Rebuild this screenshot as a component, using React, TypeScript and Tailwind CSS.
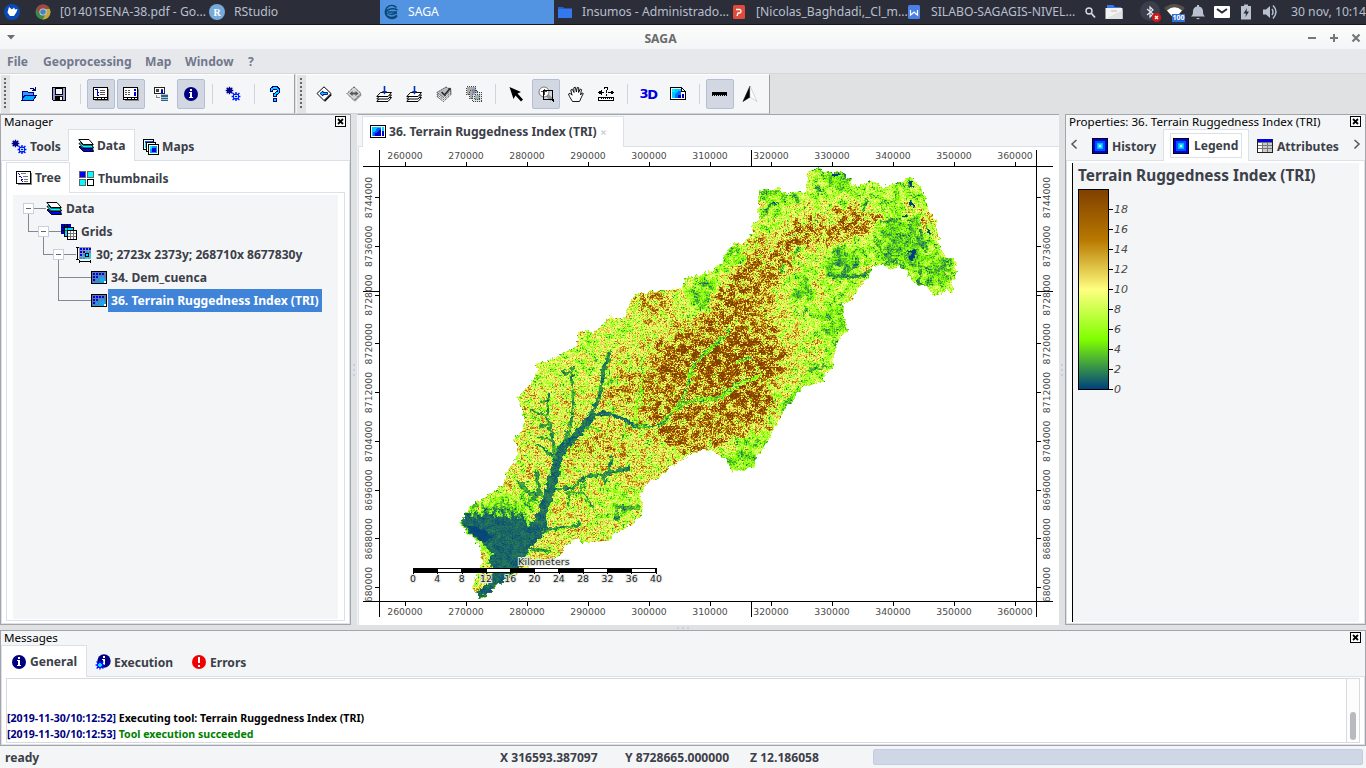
import React from "react";

type Kids = { children?: React.ReactNode };

/* ---------- icons ---------- */

function Ic({ children, w = 16, h = 16, smooth = false }: Kids & { w?: number; h?: number; smooth?: boolean }) {
  return (
    <svg width={w} height={h} viewBox={`0 0 ${w} ${h}`} className="shrink-0" shapeRendering={smooth ? "auto" : "crispEdges"}>
      {children}
    </svg>
  );
}

const gear = (cx: number, cy: number, r: number, color: string) => (
  <g stroke={color} fill="none" shapeRendering="auto">
    <circle cx={cx} cy={cy} r={r} strokeWidth="1.4" />
    <path
      strokeWidth="1.4"
      d={`M${cx} ${cy - r - 2}V${cy - r}M${cx} ${cy + r}V${cy + r + 2}M${cx - r - 2} ${cy}H${cx - r}M${cx + r} ${cy}H${cx + r + 2}M${cx - r - 1} ${cy - r - 1}L${cx - r + 1} ${cy - r + 1}M${cx + r - 1} ${cy + r - 1}L${cx + r + 1} ${cy + r + 1}M${cx + r + 1} ${cy - r - 1}L${cx + r - 1} ${cy - r + 1}M${cx - r - 1} ${cy + r + 1}L${cx - r + 1} ${cy + r - 1}`}
    />
  </g>
);

const GearsIcon = () => (
  <Ic>
    {gear(4.5, 4.5, 1.8, "#000090")}
    <circle cx="4.5" cy="4.5" r="2" fill="#000090" />
    {gear(11, 10.5, 2.4, "#0010ff")}
    <circle cx="11" cy="10.5" r="1.9" fill="#9fe4ff" />
    <circle cx="11" cy="10.5" r=".9" fill="#0020c0" />
  </Ic>
);

const OpenIcon = () => (
  <Ic>
    <path d="M9 2.5h3l2 2M14.500 1v4M11 4.500h3" fill="none" stroke="#000080" />
    <path d="M1 5h5l1 1h5v3H4l-3 5z" fill="#2f9bff" stroke="#000080" />
    <path d="M4 9h11.500l-3 5H1z" fill="#00a8ff" stroke="#000080" />
  </Ic>
);

const SaveIcon = () => (
  <Ic>
    <path d="M1.500 1.500h13v13h-12l-1-1z" fill="#9a9ad8" stroke="#000" />
    <path d="M4.500 2v6h7V2z" fill="#f4f5f7" stroke="#000" />
    <path d="M4 10h8v5H4z" fill="#000" />
    <path d="M9 11h2v3H9z" fill="#fff" />
  </Ic>
);

const WindowIcon = ({ right = false }: { right?: boolean }) => (
  <Ic>
    <path d="M2 14.500h13.500V3" fill="none" stroke="#888" />
    <path d="M.5 1.500h14v12H.5z" fill="#fff" stroke="#000" />
    <path d="M1 11.500h13M4.500 12v1M8.500 12v1M11.500 12v1" stroke="#000" />
    {right ? (
      <>
        <path d="M2 4.500h6M2 6.500h6M2 8.500h6" stroke="#555" strokeDasharray="2 1" />
        <path d="M11 3h2v2h-2zM11 6h2v4h-2z" fill="#0000e0" />
      </>
    ) : (
      <>
        <path d="M2 3.500h3M4.500 4v6M4 6.500h2M4 9.500h2" stroke="#0000c0" fill="none" />
        <path d="M7 4.500h5M7 6.500h5M7 8.500h5" stroke="#555" />
      </>
    )}
  </Ic>
);

const SourceIcon = () => (
  <Ic>
    <path d="M1.500 1.500h10v6h-10z" fill="#fff" stroke="#222" />
    <path d="M3 3h3v3H3zM8 3h2v1H8z" fill="#444" />
    <path d="M8 4h2v3H8z" fill="#0000d0" />
    <path d="M3.500 9v2.500H7" stroke="#888" fill="none" />
    <path d="M8 8h7v7H8z" fill="#31607f" />
    <path d="M8 8.500h7M8 11h7M8 13.500h7" stroke="#a7c6d6" />
  </Ic>
);

const InfoIcon = ({ color = "#000080", mark = "i" }: { color?: string; mark?: string }) => (
  <Ic>
    <circle cx="8" cy="8" r="7" fill={color} shapeRendering="auto" />
    {mark === "i" ? (
      <path d="M7 3h2v2H7zM6 6h3v5h1v1H6v-1h1V7H6z" fill="#fff" />
    ) : (
      <path d="M7 3h2v6H7zM7 11h2v2H7z" fill="#fff" />
    )}
  </Ic>
);

const ExecIcon = () => (
  <Ic>
    <circle cx="9" cy="7" r="6.700" fill="#000080" shapeRendering="auto" />
    <path d="M8 2h2v2H8zM7 5h3v6H8V6H7z" fill="#fff" />
    {gear(5, 11, 2.4, "#0010ff")}
    <circle cx="5" cy="11" r="1.700" fill="#00e0ff" />
  </Ic>
);

const HelpIcon = () => (
  <Ic>
    <path d="M4.500 6V3.500L6.500 2h3l2 1.500v2.500L8 8.500V11" fill="none" stroke="#000080" strokeWidth="3.600" />
    <path d="M4.500 5V3.500L6.500 2h3l2 1.500v2.500L8 8.500V10" fill="none" stroke="#00d8ff" strokeWidth="1.600" />
    <path d="M6 12h4v4H6z" fill="#000080" />
    <path d="M7 13h2v2H7z" fill="#00d8ff" />
  </Ic>
);

const DiamondIcon = ({ dim = false }: { dim?: boolean }) => (
  <Ic smooth>
    <path d="m8.500 15.300 6.800-6.800" fill="none" stroke={dim ? "#999" : "#000"} strokeWidth="1.400" />
    <path d="M8 .8 15 7.500l-7 7-7-7z" fill={dim ? "#d5d5d5" : "#fff"} stroke={dim ? "#444" : "#000"} strokeDasharray={dim ? "1.500 .7" : undefined} />
    {dim ? (
      <>
        <path d="M3.500 7.500 6.500 5v5zM12.500 7.500l-3-2.500v5z" fill="#555" />
        <path d="M6 7.500h4" stroke="#555" strokeWidth="2" />
      </>
    ) : (
      <path d="M4 7.500 7 5v1.500h4.500v2H7V10z" fill="#00cfff" stroke="#000080" strokeWidth=".9" />
    )}
  </Ic>
);

const LayersDownIcon = () => (
  <Ic smooth>
    <g fill="#fff" stroke="#000">
      <path d="M4.500 11.500 15.500 11.500 12 15.500H.8z" />
      <path d="M4.500 9 15.500 9 12 13H.8z" />
      <path d="M4.500 6.500 15.500 6.500 12 10.500H.8z" />
    </g>
    <path d="M8.500 0v7" stroke="#0030b0" strokeWidth="1.600" />
    <path d="M6 5h5l-2.500 3.500z" fill="#003090" />
  </Ic>
);

const StackDimIcon = () => (
  <Ic smooth>
    <g fill="#eee" stroke="#444" strokeDasharray="1.500 .8">
      <path d="M10 5.500 15.500 8l-8 7.500L.8 10.500z" />
      <path d="M10 3.500 15.500 6l-8 7.500L.8 8.500z" />
      <path d="M10 1 15.500 4l-8 7.500L.8 6.500z" fill="#bbb" />
    </g>
    <path d="m5.500 6 3 3 6-7" fill="none" stroke="#223" strokeWidth="1.500" />
  </Ic>
);

const CopiesDimIcon = () => (
  <Ic>
    <g fill="#aaa" stroke="#444" strokeDasharray="1 1">
      <path d="M.5.5h9v8h-9z" />
      <path d="M3.500 4.500h8v8h-8z" />
      <path d="M6.500 6.500h9v9h-9z" fill="#e2e2e2" />
      <path d="M8.500 8.500h5v5h-5z" fill="#aaa" />
    </g>
    <path d="M6 3h3v6H6z" fill="#7a86c0" opacity=".6" />
    <path d="M9 9h3v3H9z" fill="#6cc" opacity=".5" />
  </Ic>
);

const CursorIcon = () => (
  <Ic smooth>
    <path d="m1.500 1 11.500 5-3.500 1.500 5.500 6-2 2-5.500-6L5.500 13z" fill="#000" />
  </Ic>
);

const ZoomIcon = () => (
  <Ic>
    <path d="M9 9l5 5" stroke="#999" strokeWidth="3" />
    <circle cx="6" cy="6" r="5" fill="#fff" stroke="#777" shapeRendering="auto" />
    <path d="M6.500 3v6M3 5.500h6" stroke="#444" />
    <path d="M5.500 4.500h9v9h-9z" fill="none" stroke="#000" />
    <path d="M14 13h2v3h-1z" fill="#000" />
  </Ic>
);

const HandIcon = () => (
  <Ic smooth>
    <path
      d="M4.500 15.500 1.500 10.500l-1-2.500 1.500-.8 2 2L2.800 4l1.400-.8L6 6.500 5.800 1.800 7.300 1.200 8.400 6l.8-4.500 1.500.2-.1 4.800 1.600-3.500 1.300.6-1 5.400 1.500-2 1.300.5L13.500 11l-2 4.500z"
      fill="#fff"
      stroke="#000"
      strokeWidth=".9"
    />
  </Ic>
);

const MeasureIcon = () => (
  <Ic>
    <path d="M1 6.500h5M10 6.500h5" stroke="#000" />
    <path d="M0 6.500 3.500 4v5zM16 6.500 12.500 4v5z" fill="#000" />
    <path d="M6.500 3V1.500h3v2L8 5v2M8 8v1.500" stroke="#000" fill="none" />
    <path d="M.5 11.500h15v3H.5z" fill="#fff" stroke="#000" />
    <path d="M3.500 12v1M5.500 12v1M7.500 12v1M9.500 12v1M11.500 12v1M13.500 12v1" stroke="#000" />
  </Ic>
);

const MapDocIcon = () => (
  <Ic>
    <path d="M.5 1.500h11l4 4v8H.5z" fill="#fff" stroke="#000" />
    <path d="M2 3h9v9H2z" fill="#00c8ff" />
    <path d="M5 12V8l3-3h3v7z" fill="#0070ff" />
    <path d="M8 12V9h3v3z" fill="#0000c0" />
    <path d="M2 3h3v3H2z" fill="#00f0ff" />
    <path d="M12 8h2v4h-2z" fill="#0000c0" />
    <path d="M11.500 2v3.500h4" fill="none" stroke="#000" />
  </Ic>
);

const ScaleIcon = () => (
  <Ic>
    <path d="M0 6h15v3H0zM0 9h1v1H0zM14 9h1v1h-1z" fill="#000" />
    <path d="M2.500 9v1M4.500 9v1M6.500 9v1M8.500 9v1M10.500 9v1M12.500 9v1" stroke="#000" />
  </Ic>
);

const NorthIcon = () => (
  <Ic smooth>
    <path d="M8 0v11L1 15.500z" fill="#000" stroke="#000" strokeWidth=".6" />
    <path d="M8 0v11l7 4.500z" fill="#fff" stroke="#bbb" strokeWidth=".6" />
  </Ic>
);

const LayersIcon = () => (
  <Ic smooth>
    <path d="M1 9l1-1 3 2.500h9.500L15.500 13.500H5.500z" fill="#0000ff" stroke="#000" />
    <path d="M1 5.500l1.500-.8L5 7h9l1.500 3H5.500z" fill="#00ffff" stroke="#000" />
    <path d="M.8 1.500h10.200l4.300 5H5.300z" fill="#fff" stroke="#000" />
  </Ic>
);

const MapsIcon = () => (
  <Ic>
    <path d="M.5.5h10v10H.5z" fill="#fff" stroke="#000" />
    <path d="M2 2h8v2H2z" fill="#0060ff" />
    <path d="M2 4h1v5H2z" fill="#00e0ff" />
    <path d="M3.500 3.500h9v9h-9z" fill="#fff" stroke="#000" />
    <path d="M5.500 5.500h10v10h-10z" fill="#fff" stroke="#000" />
    <path d="M7 7h7v7H7z" fill="#00a0ff" />
    <path d="M9 9h4v4H9z" fill="#0000e0" />
    <path d="M7 7h2v3H7z" fill="#00f0ff" />
  </Ic>
);

const TreeIcon = () => (
  <Ic>
    <path d="M2 14.500h13.500V3" fill="none" stroke="#888" />
    <path d="M.5 1.500h14v12H.5z" fill="#fff" stroke="#000" />
    <path d="M2 3.500h2M3.500 4v3M4 6.500h2M5.500 7v5M6 9.500h1M6 11.500h1" stroke="#0000d0" fill="none" strokeDasharray="1 .6" />
    <path d="M5 3.500h5M7 6.500h5M8 9.500h4M8 11.500h4" stroke="#777" />
  </Ic>
);

const ThumbsIcon = () => (
  <Ic>
    <path d="M.5.500h6v6h-6z" fill="#0000ff" stroke="#666" />
    <path d="M8.500.500h6v6h-6z" fill="#00ffff" stroke="#666" />
    <path d="M.5 8.500h6v6h-6z" fill="#00ffff" stroke="#666" />
    <path d="M8.500 8.500h6v6h-6z" fill="#fff" stroke="#000" />
  </Ic>
);

const GridsIcon = () => (
  <Ic>
    <path d="M0 0h10v10H0z" fill="#0000c0" />
    <path d="M0 3.500h10M0 6.500h10M3.500 0v10M6.500 0v10" stroke="#000" />
    <path d="M3.500 3.500h9v9h-9z" fill="#00e0ff" stroke="#000" />
    <path d="M4 6.500h8M6.500 4v8" stroke="#086" />
    <path d="M6.500 6.500h9v9h-9z" fill="#fff" stroke="#000" />
    <path d="M7 9.500h8M7 12.500h8M9.500 7v8M12.500 7v8" stroke="#777" />
  </Ic>
);

const gridCells = (x0: number, y0: number, nx: number, ny: number) => {
  const out: React.ReactNode[] = [];
  for (let j = 0; j < ny; j++)
    for (let i = 0; i < nx; i++) {
      const t = i + j;
      const blue = j === 0 || t < 3;
      out.push(
        <rect key={`${i}-${j}`} x={x0 + i * 3} y={y0 + j * 3} width="2" height="2" fill={blue ? "#0000f0" : t < 5 ? "#18a0f0" : "#10e0ff"} />
      );
    }
  return out;
};

const SystemIcon = () => (
  <Ic>
    <path d="M3 0h12v12H3z" fill="#8f9aa5" />
    {gridCells(4, 1, 4, 4)}
    <path d="M1.500 0v13M0 .5h3M0 12.500h3M3 14.500h12M3.500 13v3M14.500 13v3" stroke="#000" />
    <path d="M9.500 6.500h3v3h-3z" fill="#0df" stroke="#000" />
  </Ic>
);

const GridIcon = () => (
  <Ic>
    <path d="M.5 1.500h15v12H.5z" fill="#5b7c9e" stroke="#000" />
    {gridCells(2, 3, 4, 3)}
    <path d="M9 8h5v4H9z" fill="#18a8f0" />
    <path d="M2 12h12v1H2z" fill="#18a0e0" />
    <path d="M13 11h2v2h-2z" fill="#fff" />
  </Ic>
);

const MapTabIcon = () => (
  <Ic>
    <path d="M.5 1.500h15v12H.5z" fill="#fff" stroke="#000" />
    <path d="M2 3h9v9H2z" fill="#00c8ff" />
    <path d="M3 12V8l3-1 1-3h4v8z" fill="#0060ff" />
    <path d="M5 12V9l3-1 1-2h2v6z" fill="#0000d0" />
    <path d="M12 3h2v4h-2z" fill="#00d8ff" />
    <path d="M12 7h2v5h-2z" fill="#0000c0" />
  </Ic>
);

const RadialIcon = () => (
  <Ic>
    <path d="M0 0h16v16H0z" fill="#000" />
    <path d="M1 1h14v14H1z" fill="#0000d8" />
    <path d="M3 3h10v10H3z" fill="#0050ff" />
    <path d="M5 5h6v6H5z" fill="#00b4ff" />
    <path d="M6 6h4v4H6z" fill="#00e8ff" />
    <path d="M7 7h2v2H7z" fill="#fff" />
  </Ic>
);

const TableIcon = () => (
  <Ic>
    <path d="M.5 1.500h15v13H.5z" fill="#fff" stroke="#222" />
    <path d="M1 1h14v3H1z" fill="#0000e0" />
    <path d="M6 4h9v10H6z" fill="#ccc" />
    <path d="M1 4.500h14M1 7.500h14M1 10.500h14M5.500 4v10M10.500 4v10" stroke="#777" />
  </Ic>
);

const CloseBox = () => (
  <Ic w={11} h={11}>
    <path d="M.5.500h10v10H.5z" fill="#fff" stroke="#000" />
    <path d="m3 3 5 5M8 3 3 8" stroke="#000" strokeWidth="1.800" shapeRendering="auto" />
  </Ic>
);

/* ---------- desktop bar ---------- */

function Task({ icon, label, cls }: { icon: React.ReactNode; label: string; cls: string }) {
  return (
    <div className={`flex h-full shrink-0 items-center whitespace-nowrap ${cls}`}>
      {icon}
      <span>{label}</span>
    </div>
  );
}

const DesktopBar = () => (
  <div className="flex h-[25px] shrink-0 items-center border-b border-[#17181c] bg-[#2b2e39] text-[12.200px] text-[#b9bfcd]">
    <div className="flex w-[35px] shrink-0 justify-start pl-1">
      <Ic smooth>
        <circle cx="8" cy="8" r="8" fill="#0a4ab4" />
        <path d="M5 3 8 5.500 10 3.500l1 2 2.500-.5-1 3L10 12H6L3.500 8.500z" fill="#fff" />
      </Ic>
    </div>
    <Task
      cls="w-[174px] gap-[9px]"
      label="[01401SENA-38.pdf - Go..."
      icon={
        <Ic smooth>
          <circle cx="8" cy="8" r="7.500" fill="#3a8a4a" />
          <path d="M8 .5A7.500 7.500 0 0 1 14.500 4.500H8L4.500 10 1.500 4.300A7.500 7.500 0 0 1 8 .5z" fill="#a84440" />
          <path d="M14.800 5A7.500 7.500 0 0 1 7.500 15.500L11.500 9 10.500 5z" fill="#c9a63c" />
          <circle cx="8" cy="8" r="3.600" fill="#d5d8de" />
          <circle cx="8" cy="8" r="2.800" fill="#4680c8" />
        </Ic>
      }
    />
    <Task
      cls="w-[171px] gap-[9px]"
      label="RStudio"
      icon={
        <div className="flex size-4 items-center justify-center rounded-full bg-[#75aadb] font-['Liberation_Serif',serif] text-[10px] font-bold text-white">
          R
        </div>
      }
    />
    <Task
      cls="w-[174px] gap-[9px] bg-[#5294e2] pl-[3px] !text-white"
      label="SAGA"
      icon={
        <Ic smooth>
          <path d="M13.500 3.500A6.500 6.500 0 1 0 14 12M14.500 6C10 3.500 4 5 3 8.500c2 3 7 2 11 .5M5 8h9M4 12c3 2 7 2 10-1" fill="none" stroke="#0b4778" strokeWidth="1.600" />
          <path d="M4 5c2-3 6-3 8-1M4 10c3 2 7 2 10 0" fill="none" stroke="#2f8fd0" strokeWidth="1" />
        </Ic>
      }
    />
    <Task
      cls="w-[176px] gap-[9px] pl-[3px]"
      label="Insumos - Administrado..."
      icon={
        <Ic smooth>
          <path d="M1 3h5l1 1.500h8V14H1z" fill="#3478f0" />
          <path d="M1 3h5l1 2H1z" fill="#2560d0" />
        </Ic>
      }
    />
    <Task
      cls="w-[175px] gap-[10px]"
      label="[Nicolas_Baghdadi,_Cl_m..."
      icon={
        <Ic smooth>
          <rect x="3" y="1" width="12" height="14" rx="1.500" fill="#e04a3a" />
          <path d="M6 5.500h4a2 2 0 0 1 0 3.500H8L7 12" fill="none" stroke="#fff" strokeWidth="1.300" />
        </Ic>
      }
    />
    <Task
      cls="w-[176px] gap-[10px]"
      label="SILABO-SAGAGIS-NIVEL..."
      icon={
        <Ic smooth>
          <rect x="3" y="1" width="12" height="14" rx="1.500" fill="#4a80e8" />
          <path d="M5.500 6v5l2-1.500L9 8l1.500 1.500 2 1.500V6" fill="none" stroke="#fff" strokeWidth="1.200" />
        </Ic>
      }
    />
    <div className="flex grow items-center">
      <div className="ml-[1px]">
        <Ic smooth>
          <circle cx="7" cy="7" r="3" fill="none" stroke="#d3dae3" strokeWidth="1.400" />
          <path d="m9.500 9.500 3.500 4" stroke="#d3dae3" strokeWidth="1.800" />
        </Ic>
      </div>
      <div className="ml-[7px]">
        <Ic w={18} smooth>
          <path d="M2 1h6l2 2h6v4H2z" fill="#3478f0" />
          <path d="M.5 4h17v11H.5z" fill="#f3f3f3" />
          <path d="M.5 15 17.500 6v9z" fill="#e2e2e2" />
          <path d="M6 7h6" stroke="#bbb" />
        </Ic>
      </div>
      <div className="ml-[17px]">
        <Ic w={22} h={24} smooth>
          <circle cx="10" cy="11" r="10" fill="#3a3e4d" />
          <path d="m7 9 6 5-3 3V7l3 3-6 5" fill="none" stroke="#e4e8ee" strokeWidth="1.200" />
          <circle cx="16.500" cy="17.500" r="4.700" fill="#cc1a1a" />
          <path d="m15 16 3 3m0-3-3 3" stroke="#fff" strokeWidth="1.300" />
        </Ic>
      </div>
      <div className="relative ml-[2px]">
        <Ic w={21} h={20} smooth>
          <path d="M0 6Q10.500-2 21 6L10.500 17z" fill="#545048" />
          <path d="M3 8.500Q10.500 2 18 8.500L10.500 17z" fill="#fff" />
        </Ic>
        <div className="absolute top-[12px] left-[8px] h-[8px] w-[13px] bg-[#2f6fd6] text-center text-[7px] leading-[8px] font-bold text-white">100</div>
      </div>
      <div className="ml-[5px]">
        <Ic smooth>
          <path d="M1 12.500C3 11 3 9 3 7a5 5 0 0 1 4-4.500V1h2v1.500A5 5 0 0 1 13 7c0 2 0 4 2 5.500zM6 14h4l-2 1.500z" fill="#b9c0ce" />
        </Ic>
      </div>
      <div className="ml-[8px]">
        <Ic smooth>
          <rect x="0" y="2" width="16" height="12" rx="1" fill="#fff" />
          <path d="m3 5 5 3.500L13 5" fill="none" stroke="#2b2e39" strokeWidth="2" />
        </Ic>
      </div>
      <div className="ml-[8px]">
        <Ic smooth>
          <path d="M3 2h3V.5h4V2h3v13.500H3z" fill="#b9c0ce" />
          <path d="M9 4 5.500 9.500H8L7.500 13 11 7.500H8.500z" fill="#2b2e39" />
        </Ic>
      </div>
      <div className="ml-[8px]">
        <Ic smooth>
          <path d="M1 5.500h3L8 2v12L4 10.500H1z" fill="#b9c0ce" />
          <path d="M10 5q2 3 0 6M11 1.500q6 6 0 13" fill="none" stroke="#b9c0ce" strokeWidth="1.500" />
        </Ic>
      </div>
      <span className="ml-[13px] whitespace-nowrap">30 nov, 10:14</span>
    </div>
  </div>
);

/* ---------- window chrome ---------- */

const TitleBar = () => (
  <div className="flex h-[24px] shrink-0 items-center bg-linear-to-b from-[#fcfcfa] to-[#f3f5f7] pl-[6px]">
    <Ic w={10} h={8} smooth>
      <path d="M1 2h8L5 6.500z" fill="#6a6d72" />
    </Ic>
    <div className="grow pt-[4px] text-center text-[12.200px] leading-[20px] font-bold text-[#6b6b6b]">SAGA</div>
    <div className="w-[61px] pt-[1px]">
      <Ic w={61} h={12}>
        <path d="M3 5h8v2H3z" fill="#777" />
        <path d="M25 5h8v2h-8zM28 2h2v8h-2z" fill="#777" />
        <path d="m47.500 2.500 7 7m0-7-7 7" stroke="#777" strokeWidth="2.200" shapeRendering="auto" />
      </Ic>
    </div>
  </div>
);

const MenuBar = () => (
  <div className="flex h-[25px] shrink-0 items-center gap-[14px] border-b border-[#d5d7db] bg-[#e7e8eb] pt-[2px] pl-[7px] text-[12.100px] font-bold text-[#70788d]">
    <span className="w-[22px]">File</span>
    <span className="w-[88px]">Geoprocessing</span>
    <span className="w-[26px]">Map</span>
    <span className="w-[49px]">Window</span>
    <span>?</span>
  </div>
);

function Tb({ on = false, children }: Kids & { on?: boolean }) {
  return (
    <div
      className={
        on
          ? "flex h-[30px] w-7 items-center justify-center rounded-[2px] border border-[#b4bed6] bg-[#d3d7e2]"
          : "flex h-[30px] w-7 items-center justify-center"
      }
    >
      {children}
    </div>
  );
}

const Sep = () => (
  <div className="flex w-[10px] justify-center">
    <div className="h-5 w-px bg-[#d0d3d9]" />
  </div>
);

const Grip = () => (
  <div className="flex w-[10px] items-center justify-center self-stretch border-l border-[#f4f5f7] bg-[#e2e3e5]">
    <Ic w={3} h={32}>
      {[0, 4, 8, 12, 16, 20, 24, 28].map((y) => (
        <rect key={y} x="0" y={y} width="2" height="2" fill="#666" />
      ))}
    </Ic>
  </div>
);

const ToolBars = () => (
  <div className="flex h-[40px] shrink-0 gap-px bg-[#e0e1e3]">
    <div className="flex w-[295px] items-center gap-[2px] border-t border-r border-t-white border-r-[#9d9fa3] border-b border-b-[#d0d2d6] bg-[#f5f6f8]">
      <Grip />
      <div className="w-px" />
      <Tb><OpenIcon /></Tb>
      <Tb><SaveIcon /></Tb>
      <Sep />
      <Tb on><WindowIcon /></Tb>
      <Tb on><WindowIcon right /></Tb>
      <Tb><SourceIcon /></Tb>
      <Tb on><InfoIcon /></Tb>
      <Sep />
      <Tb><GearsIcon /></Tb>
      <Sep />
      <Tb><HelpIcon /></Tb>
    </div>
    <div className="flex w-[474px] items-center gap-[2px] border-t border-r border-t-white border-r-[#9d9fa3] border-b border-b-[#d0d2d6] bg-[#f5f6f8]">
      <Grip />
      <div className="w-0" />
      <Tb><DiamondIcon /></Tb>
      <Tb><DiamondIcon dim /></Tb>
      <Tb><LayersDownIcon /></Tb>
      <Tb><LayersDownIcon /></Tb>
      <Tb><StackDimIcon /></Tb>
      <Tb><CopiesDimIcon /></Tb>
      <Sep />
      <Tb><CursorIcon /></Tb>
      <Tb on><ZoomIcon /></Tb>
      <Tb><HandIcon /></Tb>
      <Tb><MeasureIcon /></Tb>
      <Sep />
      <Tb>
        <span className="font-['DejaVu_Sans',sans-serif] text-[13px] font-bold tracking-[-1.500px] text-[#0000e0]">
          3<span className="relative top-px">D</span>
        </span>
      </Tb>
      <Tb><MapDocIcon /></Tb>
      <Sep />
      <Tb on><ScaleIcon /></Tb>
      <Tb><NorthIcon /></Tb>
    </div>
  </div>
);

const Caption = ({ text }: { text: string }) => (
  <div className="flex h-[14px] shrink-0 items-start justify-between pt-px pr-[4px] pl-[3px] text-[11.600px] leading-[11px] font-normal text-black">
    <span className="whitespace-nowrap">{text}</span>
    <CloseBox />
  </div>
);

/* ---------- manager ---------- */

function Row({ pad, icon, label, sel = false }: { pad: string; icon: React.ReactNode; label: string; sel?: boolean }) {
  return (
    <div className={`flex h-[23px] items-center ${pad}`}>
      {icon}
      <span className={sel ? "ml-px h-[23px] bg-[#3f84d8] px-[3px] leading-[23px] text-white" : "px-[4px] leading-[22px]"}>{label}</span>
    </div>
  );
}

const Manager = () => (
  <div className="flex w-[351px] shrink-0 flex-col border border-[#a3a5aa] bg-[#f4f5f7] text-[12.100px] font-bold text-[#3c4049]">
    <Caption text="Manager" />
    <div className="flex h-[32px] shrink-0">
      <div className="flex w-[67px] items-center gap-[3px] border-b border-[#dce0e8] pt-[4px] pl-[10px]">
        <GearsIcon />
        <span className="pt-px">Tools</span>
      </div>
      <div className="flex w-[67px] items-center gap-[3px] border-x border-t border-[#dce0e8] bg-white pl-[9px]">
        <LayersIcon />
        <span className="pt-px">Data</span>
      </div>
      <div className="flex grow items-center gap-[3px] border-b border-[#dce0e8] pt-[4px] pl-[8px]">
        <MapsIcon />
        <span className="pt-px">Maps</span>
      </div>
    </div>
    <div className="flex grow flex-col border border-[#dce0e8] border-t-white bg-white px-1 pb-[2px]">
      <div className="flex h-[31px] shrink-0">
        <div className="flex w-[64px] items-center gap-[3px] border-x border-t border-[#dce0e8] pl-[9px]">
          <TreeIcon />
          <span className="pt-px">Tree</span>
        </div>
        <div className="flex w-[275px] items-center gap-[3px] border-b border-[#dce0e8] pt-[4px] pl-[9px]">
          <ThumbsIcon />
          <span className="pt-px">Thumbnails</span>
        </div>
      </div>
      <div className="flex w-[339px] grow flex-col border-x border-b border-[#dce0e8] px-[6px] pt-[2px] pb-[1px]">
        <div className="relative flex grow flex-col bg-[#f4f5f7] pt-[2px]">
          <svg className="absolute top-[2px] left-0" width="110" height="120" shapeRendering="crispEdges">
            <path
              d="M15.500 11v23.500H48M30.500 34v23.500H63M45.500 57v46.500H78M45.500 80.500H78M15 11.500H33"
              fill="none"
              stroke="#85888d"
            />
            {[
              [10, 6],
              [25, 29],
              [40, 52],
            ].map(([x, y]) => (
              <g key={x}>
                <rect x={x + 0.5} y={y + 0.5} width="10" height="10" fill="#fff" stroke="#c9cfe0" />
                <path d={`M${x + 3} ${y + 5.5}h5`} stroke="#666" />
              </g>
            ))}
          </svg>
          <div className="relative">
            <Row pad="pl-[33px]" icon={<LayersIcon />} label="Data" />
            <Row pad="pl-[48px]" icon={<GridsIcon />} label="Grids" />
            <Row pad="pl-[63px]" icon={<SystemIcon />} label="30; 2723x 2373y; 268710x 8677830y" />
            <Row pad="pl-[78px]" icon={<GridIcon />} label="34. Dem_cuenca" />
            <Row pad="pl-[78px]" icon={<GridIcon />} label="36. Terrain Ruggedness Index (TRI)" sel />
          </div>
        </div>
      </div>
    </div>
  </div>
);

/* ---------- map ---------- */

const OUTLINE =
  "480,599 473,588 477,575 482,565 480,547 475,538 465,530 460,523 470,507 485,497 503,485 506,473 518,457 517,447 512,438 523,430 524,417 518,398 531,383 537,373 537,363 555,359 562,353 577,347 577,337 582,330 590,333 602,327 610,317 623,319 633,295 645,292 667,290 683,288 686,278 700,274 712,272 715,267 723,264 723,257 735,243 743,245 752,232 752,223 759,220 758,205 760,190 778,189 787,195 795,191 806,192 807,173 818,168 830,173 843,170 847,178 857,187 869,181 883,187 898,183 910,177 918,182 925,198 930,213 937,223 939,247 947,258 955,260 957,276 951,283 953,293 946,290 938,296 931,292 928,286 915,284 908,275 902,267 888,268 880,264 872,267 869,277 855,292 852,300 842,305 844,318 848,330 837,343 833,358 833,367 823,375 823,382 803,387 787,407 775,427 763,450 757,455 755,468 748,467 733,473 729,467 728,460 705,448 687,457 670,467 660,477 647,483 640,495 644,508 640,517 622,530 612,535 610,541 583,543 577,538 567,545 557,558 530,566 512,577 497,585 488,595";

const lon = Array.from({ length: 11 }, (_, i) => ({ x: 405 + i * 61, t: String(260000 + i * 10000) }));
const lat = Array.from({ length: 9 }, (_, i) => ({ y: 197.5 + i * 48.75, t: String(8744000 - i * 8000) }));

const Regions = () => (
  <g filter="url(#soft)">
    {/* gentle ground */}
    <g fill="#545454">
      <path d="M755 185 800 185 800 170 860 165 930 175 945 230 960 260 950 300 900 290 870 260 850 300 850 350 830 390 790 410 770 450 755 475 715 475 720 450 760 430 785 390 805 380 812 340 792 300 792 270 850 245 880 225 870 200 800 205 755 240z" />
      <path d="M675 280 725 262 720 300 685 315zM715 250 750 240 752 265 720 270z" />
      <path d="M530 370 580 340 640 300 640 330 600 350 590 400 570 370 545 400z" fill="#666" />
      <path d="M460 520 500 490 540 500 530 540 480 560z" fill="#444" />
      <path d="M600 480 640 500 630 520 600 520z" />
    </g>
    <g fill="#303030">
      <path d="M690 290 710 282 718 300 700 312zM820 168 846 168 848 180 825 184zM760 190 778 190 772 200 760 205zM724 256 738 244 746 255 728 264z" />
      <path d="M878 225 908 220 930 255 905 270 880 260zM830 252 850 245 868 265 845 282 828 270zM800 275 812 280 810 308 798 300zM826 310 842 312 845 330 828 335zM780 400 802 385 790 412zM735 440 757 430 750 465 735 465zM920 262 950 262 950 285 925 282zM800 350 815 345 820 355 805 360z" />
      <path d="M760 205 790 195 800 205 775 218z" fill="#444" />
      <path d="M880 190 915 190 915 215 885 210z" fill="#4c4c4c" />
    </g>
    {/* steep ground */}
    <g fill="#b0b0b0">
      <path d="M752 235 762 262 785 240 805 215 818 212 818 232 795 250 782 270 766 300 766 330 785 342 788 365 770 385 778 412 745 440 715 448 685 455 655 435 640 415 640 380 660 345 690 320 705 322 718 290 735 270z" />
      <path d="M835 210 850 210 874 215 874 232 860 240 800 242 802 234 838 230z" />
      <path d="M636 296 667 292 664 312 640 320z" fill="#a4a4a4" />
      <path d="M605 380 640 370 645 420 620 410 600 400z" fill="#989898" />
      <path d="M570 420 625 430 640 470 600 470 570 450z" fill="#8e8e8e" />
      <path d="M905 205 930 210 936 235 920 225z" fill="#a8a8a8" />
      <path d="M815 270 825 270 822 300 814 300z" fill="#999" />
      <path d="M800 330 820 350 825 365 812 360z" fill="#999" />
    </g>
    <g fill="#d0d0d0">
      <path d="M715 340 745 330 765 350 780 350 782 365 745 385 765 390 770 400 750 415 730 400 700 380 695 350z" />
      <path d="M665 350 700 345 690 370 665 385zM660 430 690 425 680 450zM840 222 870 220 870 230 845 232z" />
      <path d="M725 285 745 275 740 300 722 303zM782 235 795 225 790 250 778 252z" />
    </g>
  </g>
);

const Water = () => (
  <g fill="none" stroke="#0f0f0f" strokeLinejoin="round" strokeLinecap="round">
    <g transform="translate(440 330) scale(.3333)">
      <path
        d="M60 570 85 545 95 565 110 535 120 562 140 530 150 560 165 525 175 560 195 535 205 565 220 540 232 568 245 545 265 590 290 550 312 520 325 600 272 650 240 712 200 745 150 790 118 806 108 790 150 755 160 725 145 690 160 670 125 640 75 595z"
        fill="#0d0d0d"
        stroke="none"
      />
      <path d="M70 575 95 588 135 598 155 625 130 640 100 612z" fill="#030303" stroke="none" />
      <path d="M110 560V515M145 555 150 500M180 555 187 500M210 560 207 510M240 560 252 522M90 560 100 525M165 560 168 520M130 555 125 520M195 555 200 520M225 560 228 515" stroke="#282828" strokeWidth="7" />
      <path d="M290 600 320 510 345 430 355 370 375 345" strokeWidth="30" />
      <path d="M375 345 410 318 435 285 455 262" strokeWidth="23" />
      <path d="M450 265 480 250 520 255 560 275 590 290" strokeWidth="14" />
      <path d="M590 290 655 288 700 245" strokeWidth="8" stroke="#242424" />
      <path d="M700 245 730 205 745 160 755 110 800 70 855 20" strokeWidth="7" stroke="#303030" />
      <path d="M700 240 760 212 840 205 900 165 950 145" strokeWidth="7" stroke="#383838" />
      <path d="M455 255 480 190 492 120 508 70" strokeWidth="12" stroke="#141414" />
      <path d="M490 165 540 140" strokeWidth="7" stroke="#303030" />
      <path d="M375 340 395 270 402 200 392 130 370 125M392 130 400 110" strokeWidth="10" stroke="#1c1c1c" />
      <path d="M345 370 335 310 322 260 325 190M322 260 275 240M335 330 295 320M345 380 290 345M322 215 300 212M325 285 300 290" strokeWidth="9" stroke="#1c1c1c" />
      <path d="M345 478 400 472 440 440 500 430 565 415M505 430 515 385M490 432 495 460" strokeWidth="12" stroke="#181818" />
      <path d="M380 490 430 490 460 540M415 490 435 460M390 490 385 525" strokeWidth="9" stroke="#242424" />
      <path d="M305 500 270 490 235 455M300 490 290 430M290 500 270 510" strokeWidth="13" stroke="#1c1c1c" />
      <path d="M310 602 350 595 420 585M275 655 330 665" strokeWidth="10" stroke="#1c1c1c" />
      <path d="M560 280 545 330M580 270 585 230M605 230 608 90M585 285 600 170M570 480 545 510M440 30 470 90M250 250 300 270" strokeWidth="6" stroke="#343434" />
      <path d="M520 525 560 535 595 530M530 530 530 570" strokeWidth="14" stroke="#242424" />
      <path d="M400 345 420 365M520 250 520 230M440 290 480 300M335 75 360 72" strokeWidth="8" stroke="#303030" />
    </g>
    <g transform="translate(680 150) scale(.3333)" stroke="#202020">
      <path d="M0 760 30 690 40 650 80 600 140 555 150 525M0 768 60 740 110 745 170 700 240 675M170 640 215 620" strokeWidth="7" stroke="#2c2c2c" />
      <path d="M340 320 355 295M305 370 310 345M330 440 380 430M375 390 385 420M380 480 370 490M240 130 290 125M340 130 355 155M270 170 250 200" strokeWidth="10" stroke="#282828" />
      <path d="M465 380 550 378 570 360M475 300 480 340M500 365 530 345M460 340 500 350" strokeWidth="11" stroke="#1c1c1c" />
      <path d="M590 280 620 320 660 345M620 255 650 280M720 245 740 300M740 230 750 245M700 240 730 290M720 360 715 400M790 350 820 370M440 650 380 662M600 215 660 208" strokeWidth="9" />
      <path d="M640 235 665 240M560 150 550 180M415 110 415 140M690 340 740 355M770 360 760 385M690 210 720 225M500 70 495 100M430 540 460 560M330 745 310 780" strokeWidth="10" stroke="#282828" />
      <g fill="#000" stroke="none">
        <path d="M685 95h14v18h-14zM690 155l12 5 0 12-14-4zM668 192h12v10h-12zM740 232l16 18-6 6-12-16zM678 308l20-12 12 8-12 26h-10l2-18zM284 155h8v6h-8zM456 68h22v10h-22z" />
      </g>
    </g>
  </g>
);

const MapView = () => (
  <svg width="699" height="478" viewBox="360 147 699 478" className="block font-['DejaVu_Sans',sans-serif] font-normal">
    <defs>
      <clipPath id="basin">
        <polygon points={OUTLINE} />
      </clipPath>
      <filter id="soft" filterUnits="userSpaceOnUse" x="440" y="150" width="540" height="470" colorInterpolationFilters="sRGB">
        <feGaussianBlur stdDeviation="3.500" result="b" />
        <feTurbulence type="fractalNoise" baseFrequency="0.09" numOctaves="3" seed="21" result="n" />
        <feDisplacementMap in="b" in2="n" scale="38" xChannelSelector="R" yChannelSelector="G" />
      </filter>
      <filter id="ramp" filterUnits="userSpaceOnUse" x="450" y="160" width="520" height="450" colorInterpolationFilters="sRGB">
        <feTurbulence type="fractalNoise" baseFrequency="0.22" numOctaves="2" seed="4" result="warp" />
        <feDisplacementMap in="SourceGraphic" in2="warp" scale="7" xChannelSelector="R" yChannelSelector="G" result="src" />
        <feTurbulence type="fractalNoise" baseFrequency="0.65" numOctaves="2" seed="11" />
        <feColorMatrix values="2.1 0 0 0 -0.55  2.1 0 0 0 -0.55  2.1 0 0 0 -0.55  0 0 0 0 1" result="fine" />
        <feTurbulence type="fractalNoise" baseFrequency="0.15" numOctaves="3" seed="7" />
        <feColorMatrix values="2.5 0 0 0 -0.75  2.5 0 0 0 -0.75  2.5 0 0 0 -0.75  0 0 0 0 1" result="coarse" />
        <feComposite in="fine" in2="coarse" operator="arithmetic" k2="0.56" k3="0.44" result="noise" />
        <feComposite in="src" in2="noise" operator="arithmetic" k1="1.75" k2="0.15" result="field" />
        <feComposite in="field" in2="src" operator="in" />
        <feComponentTransfer>
          <feFuncR type="table" tableValues="0 0.5 1 0.72 0.5" />
          <feFuncG type="table" tableValues="0.25 1 1 0.47 0.25" />
          <feFuncB type="table" tableValues="0.5 0 0.5 0 0" />
          <feFuncA type="discrete" tableValues="0 1" />
        </feComponentTransfer>
      </filter>
    </defs>

    <g filter="url(#ramp)">
      <g clipPath="url(#basin)">
        <rect x="450" y="160" width="520" height="450" fill="#7a7a7a" />
        <Regions />
        <Water />
      </g>
    </g>

    <path
      d="M363 166.500H1053M363 601.500H1053M379.500 150V617M1036.500 150V617M751.500 150V166M751.500 602V617M363 291.500H379M1037 291.500H1053"
      stroke="#000"
      shapeRendering="crispEdges"
    />
    <g stroke="#000" shapeRendering="crispEdges">
      {lon.map(({ x }) => (
        <path key={x} d={`M${x + 0.5} 162V166M${x + 0.5} 602V606`} />
      ))}
      {lat.map(({ y }) => (
        <path key={y} d={`M375 ${Math.floor(y) + 0.5}H379M1037 ${Math.floor(y) + 0.5}H1041`} />
      ))}
    </g>
    <g fontSize="9.300" fill="#4c4c4c" textAnchor="middle">
      {lon.map(({ x, t }) => (
        <React.Fragment key={t}>
          <text x={x} y="159">{t}</text>
          <text x={x} y="615">{t}</text>
        </React.Fragment>
      ))}
      <svg x="360" y="167" width="699" height="434" viewBox="360 167 699 434">
        {lat.map(({ y, t }) => (
          <React.Fragment key={t}>
            <text transform={`translate(372 ${y}) rotate(-90)`}>{t}</text>
            <text transform={`translate(1050 ${y}) rotate(-90)`}>{t}</text>
          </React.Fragment>
        ))}
      </svg>
    </g>

    <g shapeRendering="crispEdges">
      <rect x="413" y="568" width="243" height="5" fill="#000" />
      {[0, 1, 2, 3, 4].map((i) => (
        <rect key={i} x={438 + i * 48.6} y="569" width="23" height="3" fill="#fff" />
      ))}
      {Array.from({ length: 11 }, (_, i) => (
        <rect key={i} x={Math.round(413 + i * 24.25)} y="568" width="1" height="6" fill="#000" />
      ))}
    </g>
    <g fontSize="9.300" fill="#222" textAnchor="middle" stroke="#e4e8e4" strokeWidth="2" paintOrder="stroke">
      <text x="544" y="565" letterSpacing=".2">Kilometers</text>
      {Array.from({ length: 11 }, (_, i) => (
        <text key={i} x={413 + i * 24.3} y="582">{i * 4}</text>
      ))}
    </g>
  </svg>
);

const MapPanel = () => (
  <div className="flex w-[702px] shrink-0 flex-col border-t border-l border-t-[#a3a5aa] border-l-[#f4f5f7] bg-white text-[12.100px] font-bold text-[#3c4049]">
    <div className="flex h-[32px] shrink-0 bg-[#f4f5f7] pt-[1px]">
      <div className="w-[4px] border-b border-[#dce0e8]" />
      <div className="flex w-[262px] items-center gap-[3px] border-x border-t border-[#dce0e8] bg-white pl-[7px]">
        <MapTabIcon />
        <span className="whitespace-nowrap">36. Terrain Ruggedness Index (TRI)</span>
        <Ic w={7} h={7} smooth>
          <path d="m1.500 1.500 4 4m0-4-4 4" stroke="#c9cfdb" strokeWidth="1.300" />
        </Ic>
      </div>
      <div className="grow border-b border-[#dce0e8]" />
    </div>
    <div className="border-l border-[#dce0e8] pl-px">
      <MapView />
    </div>
  </div>
);

/* ---------- properties ---------- */

const Legend = () => (
  <div className="flex flex-col pt-[1px] pl-[5px]">
    <span className="h-[25px] text-[15.350px] leading-[22px] font-bold whitespace-nowrap text-[#3c4049]">Terrain Ruggedness Index (TRI)</span>
    <div className="flex">
      <div className="h-[201px] w-[31px] border border-black bg-[linear-gradient(to_bottom,#804000,#b87800_25%,#ffff80_50%,#80ff00_75%,#004080)]" />
      <div className="flex flex-col pt-[10px]">
        {[18, 16, 14, 12, 10, 8, 6, 4, 2, 0].map((v) => (
          <div key={v} className="flex h-5 items-center gap-[1px]">
            <div className="h-px w-[4px] bg-black" />
            <span className="font-['DejaVu_Sans',sans-serif] text-[11px] leading-none font-normal text-[#4a4a4a] italic">{v}</span>
          </div>
        ))}
      </div>
    </div>
  </div>
);

const Properties = () => (
  <div className="flex w-[301px] shrink-0 flex-col border border-[#a3a5aa] bg-[#f4f5f7] text-[12.100px] font-bold text-[#3c4049]">
    <Caption text="Properties: 36. Terrain Ruggedness Index (TRI)" />
    <div className="flex h-[32px] shrink-0 whitespace-nowrap">
      <div className="flex w-[97px] items-center border-b border-[#dce0e8] pl-[4px]">
        <Ic w={8} h={12} smooth>
          <path d="M6.500 1 2 5l4.500 4.500" fill="none" stroke="#555" strokeWidth="1.500" />
        </Ic>
        <div className="ml-[14px] flex items-center gap-[4px] pt-[4px]">
          <RadialIcon />
          <span className="pt-px">History</span>
        </div>
      </div>
      <div className="flex w-[86px] items-center border-x border-t border-[#dce0e8] bg-white pl-[6px]">
        <div className="flex h-[25px] w-[72px] items-center gap-[5px] border border-[#dce0e8] pl-[2px]">
          <RadialIcon />
          <span className="pt-px">Legend</span>
        </div>
      </div>
      <div className="flex grow items-center border-b border-[#dce0e8] pl-[8px]">
        <div className="flex items-center gap-[4px] pt-[4px]">
          <TableIcon />
          <span className="pt-px">Attributes</span>
        </div>
        <div className="ml-[14px]">
          <Ic w={8} h={12} smooth>
            <path d="M1.500 1 6 5l-4.500 4.500" fill="none" stroke="#555" strokeWidth="1.500" />
          </Ic>
        </div>
      </div>
    </div>
    <div className="flex grow border border-t-0 border-[#dce0e8] bg-white pt-[2px] pr-[5px] pb-[1px] pl-[5px]">
      <div className="grow border-l border-black bg-[#f4f5f7]">
        <Legend />
      </div>
    </div>
  </div>
);

/* ---------- messages ---------- */

const Messages = () => (
  <div className="flex h-[116px] shrink-0 flex-col border border-[#a3a5aa] bg-[#f4f5f7] text-[12.100px] font-bold text-[#3c4049]">
    <Caption text="Messages" />
    <div className="flex h-[32px] shrink-0">
      <div className="flex w-[86px] items-center gap-[3px] border-x border-t border-[#dce0e8] bg-white pl-[9px]">
        <InfoIcon />
        <span className="pt-px">General</span>
      </div>
      <div className="flex grow items-center border-b border-[#dce0e8] pt-[4px] pl-[8px]">
        <div className="flex w-[96px] items-center gap-[3px]">
          <ExecIcon />
          <span className="pt-px">Execution</span>
        </div>
        <div className="flex items-center gap-[3px]">
          <InfoIcon color="#f00000" mark="!" />
          <span className="pt-px">Errors</span>
        </div>
      </div>
    </div>
    <div className="flex grow border-x border-b border-[#dce0e8] bg-white px-[4px] pt-px pb-[1px]">
      <div className="flex grow border border-[#d8dade]">
        <div className="flex grow flex-col justify-end text-[10.600px] leading-[16px] text-[#000080]">
          <div>
            [2019-11-30/10:12:52] <span className="text-black">Executing tool: Terrain Ruggedness Index (TRI)</span>
          </div>
          <div>
            [2019-11-30/10:12:53] <span className="text-[#008000]">Tool execution succeeded</span>
          </div>
        </div>
        <div className="flex w-[13px] items-end justify-center border-l border-[#d8dade] bg-[#fcfcfc] pb-[2px]">
          <div className="h-[28px] w-[6px] rounded-full bg-[#b8babf]" />
        </div>
      </div>
    </div>
  </div>
);

const StatusBar = () => (
  <div className="flex h-[22px] shrink-0 items-center bg-[#f4f5f7] pt-[2px] pl-[5px] text-[12.100px] font-bold text-[#3c4049]">
    <span className="w-[495px]">ready</span>
    <span className="w-[125px]">X 316593.387097</span>
    <span className="w-[125px]">Y 8728665.000000</span>
    <span className="w-[123px]">Z 12.186058</span>
    <div className="mb-[2px] h-4 w-[490px] rounded-[2px] border border-[#c3cce0] bg-[#cfd6e5]" />
  </div>
);

const DotsV = () => (
  <div className="flex grow flex-col items-center justify-center gap-[3px] bg-[#e0e1e3]">
    <div className="size-[2px] bg-[#c8d0e0]" />
    <div className="size-[2px] bg-[#c8d0e0]" />
    <div className="size-[2px] bg-[#c8d0e0]" />
  </div>
);

export default function App() {
  return (
    <div className="flex h-[768px] w-[1366px] flex-col overflow-hidden bg-[#e0e1e3] font-['Noto_Sans',sans-serif]">
      <DesktopBar />
      <TitleBar />
      <MenuBar />
      <ToolBars />
      <div className="flex h-[511px] shrink-0">
        <Manager />
        <DotsV />
        <MapPanel />
        <DotsV />
        <Properties />
      </div>
      <div className="flex h-[5px] shrink-0 items-center justify-center gap-[3px]">
        <div className="size-[2px] bg-[#c8d0e0]" />
        <div className="size-[2px] bg-[#c8d0e0]" />
        <div className="size-[2px] bg-[#c8d0e0]" />
      </div>
      <Messages />
      <StatusBar />
    </div>
  );
}
